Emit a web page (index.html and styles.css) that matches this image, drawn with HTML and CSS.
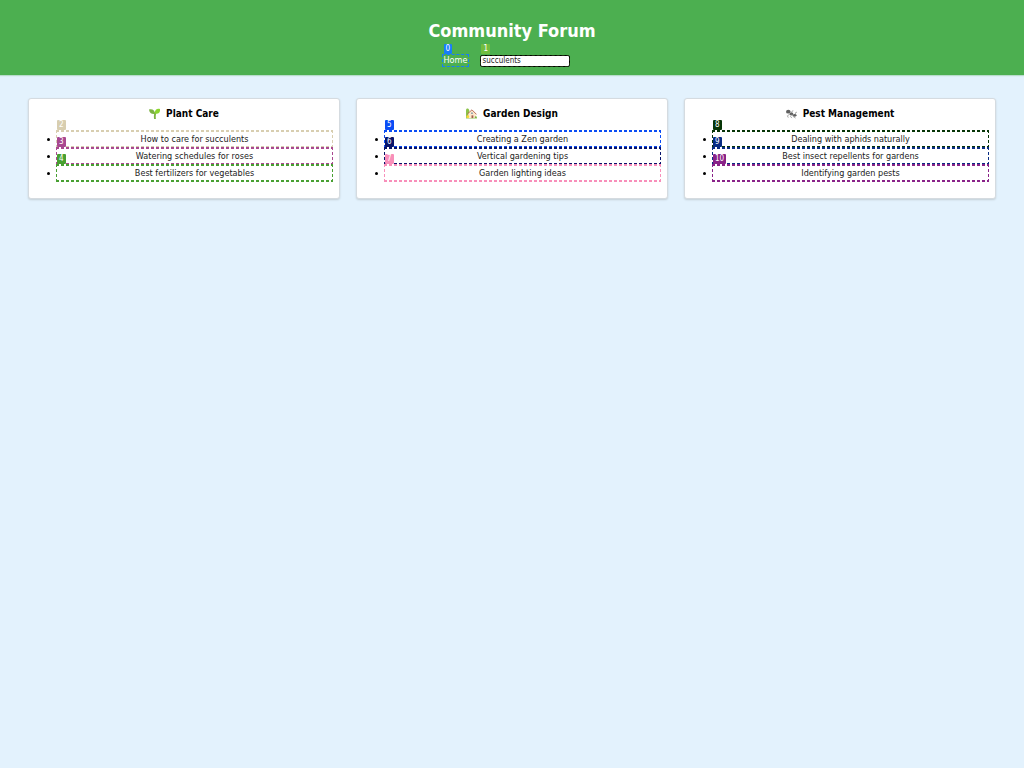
FILE: index.html
```html
<!DOCTYPE html>
<html lang="en">
<head>
<meta charset="utf-8">
<title>Community Forum</title>
<link rel="stylesheet" href="styles.css">
</head>
<body>
<header class="header">
  <h1 class="title">Community Forum</h1>
  <nav class="nav">
    <a class="mark home c0" href="#">Home<span class="tag">0</span></a>
    <div class="mark search c1"><input class="field" type="text" value="succulents" aria-label="Search"><span class="tag">1</span></div>
  </nav>
</header>
<main class="cards">
  <section class="card">
    <h2 class="heading">
      <svg class="icon" viewBox="0 0 24 24" aria-hidden="true"><path d="M13 23c-1-5 0-9 1-13" fill="none" stroke="#7cb342" stroke-width="4" stroke-linecap="round"/><path d="M13 13C5 14 1 10 0 3c8-2 13 2 13 10z" fill="#7cb342"/><path d="M13 12C12 4 17 0 24 2c1 8-4 12-11 10z" fill="#8bd52f"/></svg>
      Plant Care</h2>
    <ul class="list">
      <li class="item"><a class="mark link c2" href="#">How to care for succulents<span class="tag">2</span></a></li>
      <li class="item"><a class="mark link c3" href="#">Watering schedules for roses<span class="tag">3</span></a></li>
      <li class="item"><a class="mark link c4" href="#">Best fertilizers for vegetables<span class="tag">4</span></a></li>
    </ul>
  </section>
  <section class="card">
    <h2 class="heading">
      <svg class="icon" viewBox="0 0 24 24" aria-hidden="true"><path d="M0 20V5c0-5 6-5 7 0v15z" fill="#8bc34a"/><path d="M0 19h24v4H0z" fill="#9ccc65"/><path d="M5 12l8-7 9 8v9H5z" fill="#ffe8cc"/><path d="M3 13L13 4l10 10" fill="none" stroke="#b5624a" stroke-width="2"/><path d="M12 16h4v6h-4z" fill="#a1614f"/><path d="M11 10h4v3h-4z" fill="#90a4ae"/><circle cx="4" cy="19" r="3" fill="#fdd835"/><circle cx="21" cy="20" r="2" fill="#7cb342"/></svg>
      Garden Design</h2>
    <ul class="list">
      <li class="item"><a class="mark link c5" href="#">Creating a Zen garden<span class="tag">5</span></a></li>
      <li class="item"><a class="mark link c6" href="#">Vertical gardening tips<span class="tag">6</span></a></li>
      <li class="item"><a class="mark link c7" href="#">Garden lighting ideas<span class="tag">7</span></a></li>
    </ul>
  </section>
  <section class="card">
    <h2 class="heading">
      <svg class="icon" viewBox="0 0 24 24" aria-hidden="true"><g fill="#616161"><ellipse cx="5" cy="8" rx="5" ry="4"/><ellipse cx="12" cy="13" rx="4" ry="3"/><ellipse cx="19" cy="16" rx="4" ry="3"/></g><path d="M9 13l-6 4 2 4M12 14l-2 5 3 3M14 14l2 5 5 3M12 11l1-4 3-1M20 14l1-4 3-1" fill="none" stroke="#858585" stroke-width="1.5"/></svg>
      Pest Management</h2>
    <ul class="list">
      <li class="item"><a class="mark link c8" href="#">Dealing with aphids naturally<span class="tag">8</span></a></li>
      <li class="item"><a class="mark link c9" href="#">Best insect repellents for gardens<span class="tag">9</span></a></li>
      <li class="item"><a class="mark link c10" href="#">Identifying garden pests<span class="tag">10</span></a></li>
    </ul>
  </section>
</main>
</body>
</html>
```
FILE: styles.css
```css
* { box-sizing: border-box; }
body {
  margin: 0;
  min-height: 100vh;
  background: #e3f2fd;
  color: #000;
  font: 9px/15px "DejaVu Sans Condensed", "DejaVu Sans", sans-serif;
}
.header {
  padding: 19px 8px 8px;
  background: #4caf50;
  color: #fff;
  text-align: center;
  box-shadow: 0 1px 1px #b8dccb;
}
.title { margin: 0 0 12px; font-size: 18px; line-height: 23px; }
.nav { display: flex; justify-content: center; align-items: center; gap: 11px; margin-left: -12px; }
.mark { position: relative; }
.home {
  padding: 0 1px;
  border: 1px dashed var(--c);
  color: #fff;
  line-height: 11px;
  text-decoration: none;
}
.search { display: flex; }
.search::after { content: ""; position: absolute; inset: 0; border: 1px dashed var(--c); border-radius: 2px; pointer-events: none; opacity: .25; }
.field {
  width: 90px;
  height: 12px;
  padding: 0 1px;
  border: 1px solid #000;
  border-radius: 2px;
  outline: 0;
  background: #fff;
  color: #222;
  font: 8px/10px "DejaVu Sans Condensed", "DejaVu Sans", sans-serif;
}
.cards { display: grid; grid-template-columns: repeat(3, 1fr); gap: 16px; padding: 23px 28px; }
.card {
  padding: 7px 6px 16px;
  border: 1px solid #d5dbe0;
  border-radius: 3px;
  background: #fff;
  box-shadow: 0 1px 2px #c3ced6;
  text-align: center;
}
.heading { display: flex; justify-content: center; align-items: center; gap: 6px; margin: 0 0 9px; font-size: 10px; line-height: 15px; }
.icon { width: 11px; height: 11px; }
.list { margin: 0; padding: 0 0 0 21px; list-style: none; }
.item { position: relative; }
.item::before {
  content: "";
  position: absolute;
  top: 8px;
  left: -9px;
  width: 3px;
  height: 3px;
  border-radius: 50%;
  background: #000;
}
.item + .item { margin-top: -1px; }
.link {
  --across: repeating-linear-gradient(90deg, var(--c) 0 3px, transparent 3px 5px);
  --down: repeating-linear-gradient(var(--c) 0 3px, transparent 3px 5px);
  display: block;
  padding: 2px;
  background:
    var(--across) top / 100% 2px no-repeat,
    var(--across) bottom / 100% 2px no-repeat,
    var(--down) left / 1px 100% no-repeat,
    var(--down) right / 1px 100% no-repeat;
  color: #222;
  line-height: 14px;
  text-decoration: none;
}
.tag {
  position: absolute;
  top: -11px;
  left: 1px;
  z-index: 1;
  padding: 0 2px;
  border-radius: 1px;
  background: var(--c);
  color: #fff;
  font-size: 8px;
  line-height: 10px;
}
.link .tag { top: -10px; }
.c0 { --c: #167dfa; }
.c1 { --c: #72bd3f; }
.c2 { --c: #d8ceb0; }
.c3 { --c: #a94890; }
.c4 { --c: #48a032; }
.c5 { --c: #0b4df5; }
.c6 { --c: #08146b; }
.c7 { --c: #f88fba; }
.c8 { --c: #073507; }
.c9 { --c: #082c83; }
.c10 { --c: #892288; }
```
